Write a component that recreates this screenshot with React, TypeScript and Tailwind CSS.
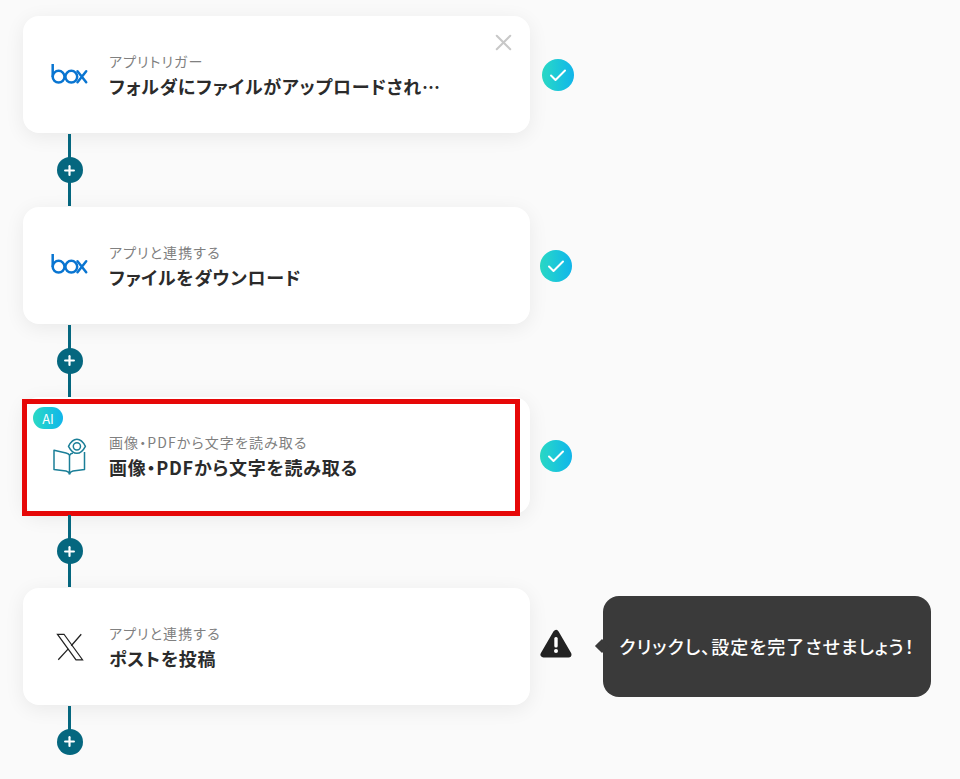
import React from "react";
import { Plus, X } from "lucide-react";

function BoxLogo() {
  return (
    <svg className="-mt-[2px]" width="38" height="22" viewBox="0 0 38 22" fill="none" stroke="#0975d1" strokeWidth="2.5">
      <path d="M1.7 1v13" />
      <circle cx="7.6" cy="13.7" r="5.9" />
      <circle cx="20.3" cy="13.7" r="5.9" />
      <path d="M26.500 8.200l8.700 11M35.200 8.200l-8.700 11" strokeLinecap="round" />
    </svg>
  );
}

function BookEye() {
  return (
    <svg width="34" height="38" viewBox="0 0 34 38" fill="none" stroke="#1b7f98" strokeWidth="1.5" strokeLinejoin="round">
      <path d="M1 13.300L13 16c2 .5 3 1.200 3.500 2.300V36.500c-.8-1.200-1.800-2-3.500-2.400L1 32.500z" />
      <path d="M16.500 18.300c.5-1 1.500-1.800 3.500-2.300M16.500 36.500c.8-1.200 1.800-2 3.500-2.400l11.500-1.600V15" />
      <path d="M16.500 36.500v1" strokeWidth="2" />
      <path d="M15.500 9.300C18 4.500 20.500 2.300 23.900 2.300s6 2.200 8.500 7c-2.500 4.800-5.100 7-8.500 7s-5.900-2.200-8.400-7z" />
      <circle cx="23.900" cy="9.300" r="3.600" />
    </svg>
  );
}

function XLogo() {
  return (
    <svg className="mt-[2px]" width="30" height="32" viewBox="0 0 24 24" fill="none" stroke="#222" strokeWidth="1">
      <path d="M2 1.800h5.200l14.800 20.400h-5.200z" />
      <path d="M21 1.800l-8 9.200M10.600 13.500l-8 8.700" />
    </svg>
  );
}

function Check({ className }: { className: string }) {
  return (
    <div className={"flex h-8 w-8 items-center justify-center rounded-full bg-gradient-to-r from-[#2bd9c4] to-[#12b5ea] " + className}>
      <svg width="18" height="14" viewBox="0 0 18 14" fill="none" stroke="#fff" strokeWidth="2" strokeLinecap="round" strokeLinejoin="round">
        <path d="M2 7.500l4.500 4.500L16 2.500" />
      </svg>
    </div>
  );
}

function Warning() {
  return (
    <svg className="-mt-[5px] ml-[10px]" width="32" height="29" viewBox="0 0 32 29">
      <path d="M16 4L3.500 25.500h25z" fill="#222" stroke="#222" strokeWidth="6" strokeLinejoin="round" />
      <rect x="14.300" y="8" width="3.400" height="10.500" rx="1.500" fill="#fff" />
      <circle cx="16" cy="22" r="2" fill="#fff" />
    </svg>
  );
}

function Connector({ last }: { last?: boolean }) {
  return (
    <div className="flex h-[73.67px] w-[507px] flex-col items-center">
      <div className={"relative ml-[-414px] mt-[1px] w-[3px] bg-[#05677f] " + (last ? "h-[30px]" : "h-[72px]")}>
        <div className="absolute left-1/2 top-[23px] flex h-[26px] w-[26px] -translate-x-1/2 items-center justify-center rounded-full bg-[#05677f]">
          <Plus size={15} color="#fff" strokeWidth={3.500} />
        </div>
      </div>
    </div>
  );
}

function Card({ icon, label, title, children }: { icon: React.ReactNode; label: string; title: string; children?: React.ReactNode }) {
  return (
    <div className="relative flex h-[117px] w-[507px] shrink-0 items-center rounded-[16px] bg-white shadow-[0_4px_20px_rgba(0,0,0,0.07)]">
      <div className="flex w-[86px] shrink-0 items-center justify-center pl-[7px]">{icon}</div>
      <div className="flex flex-col pt-[2px]">
        <span className="text-[14px] leading-[20px] tracking-[1.1px] text-[#808080]">{label}</span>
        <span className="mt-[1px] text-[18px] font-bold leading-[28px] tracking-[0.75px] text-[#2b2b2b]">{title}</span>
      </div>
      {children}
    </div>
  );
}

export default function App() {
  return (
    <div className="h-[779px] w-[960px] overflow-hidden bg-[#fafafa] pl-[23px] pt-[16px] font-['Noto_Sans_CJK_JP','Noto_Sans',sans-serif] [font-feature-settings:'palt']">
      <div className="flex items-center">
        <Card icon={<BoxLogo />} label="アプリトリガー" title="フォルダにファイルがアップロードされ…">
          <X className="absolute right-[13px] top-[13px]" size={27} color="#c8c8c8" strokeWidth={1.800} />
        </Card>
        <Check className="ml-[12px]" />
      </div>
      <Connector />
      <div className="flex items-center">
        <Card icon={<BoxLogo />} label="アプリと連携する" title="ファイルをダウンロード" />
        <Check className="ml-[10px] mt-[1px]" />
      </div>
      <Connector />
      <div className="flex items-center">
        <Card icon={<BookEye />} label="画像・PDFから文字を読み取る" title="画像・PDFから文字を読み取る">
          <div className="absolute left-[-1px] top-[2px] h-[117px] w-[498px] border-[5px] border-[#e60808]" />
          <div className="absolute left-[10px] top-[10px] flex h-[22px] w-[30px] items-center justify-center rounded-full bg-gradient-to-r from-[#2bd9c4] to-[#12b5ea] text-[13px] text-white">AI</div>
        </Card>
        <Check className="ml-[10px] mt-[1px]" />
      </div>
      <Connector />
      <div className="flex items-center">
        <Card icon={<XLogo />} label="アプリと連携する" title="ポストを投稿" />
        <Warning />
        <div className="relative ml-[31px] flex h-[101px] w-[328px] items-center justify-center rounded-[16px] bg-[#3a3a3a] text-[18px] font-medium tracking-[1.1px] text-white">
          <div className="absolute left-[-6px] top-1/2 h-[10px] w-[10px] -translate-y-1/2 rotate-45 bg-[#3a3a3a]" />
          クリックし、設定を完了させましょう！
        </div>
      </div>
      <Connector last />
    </div>
  );
}
